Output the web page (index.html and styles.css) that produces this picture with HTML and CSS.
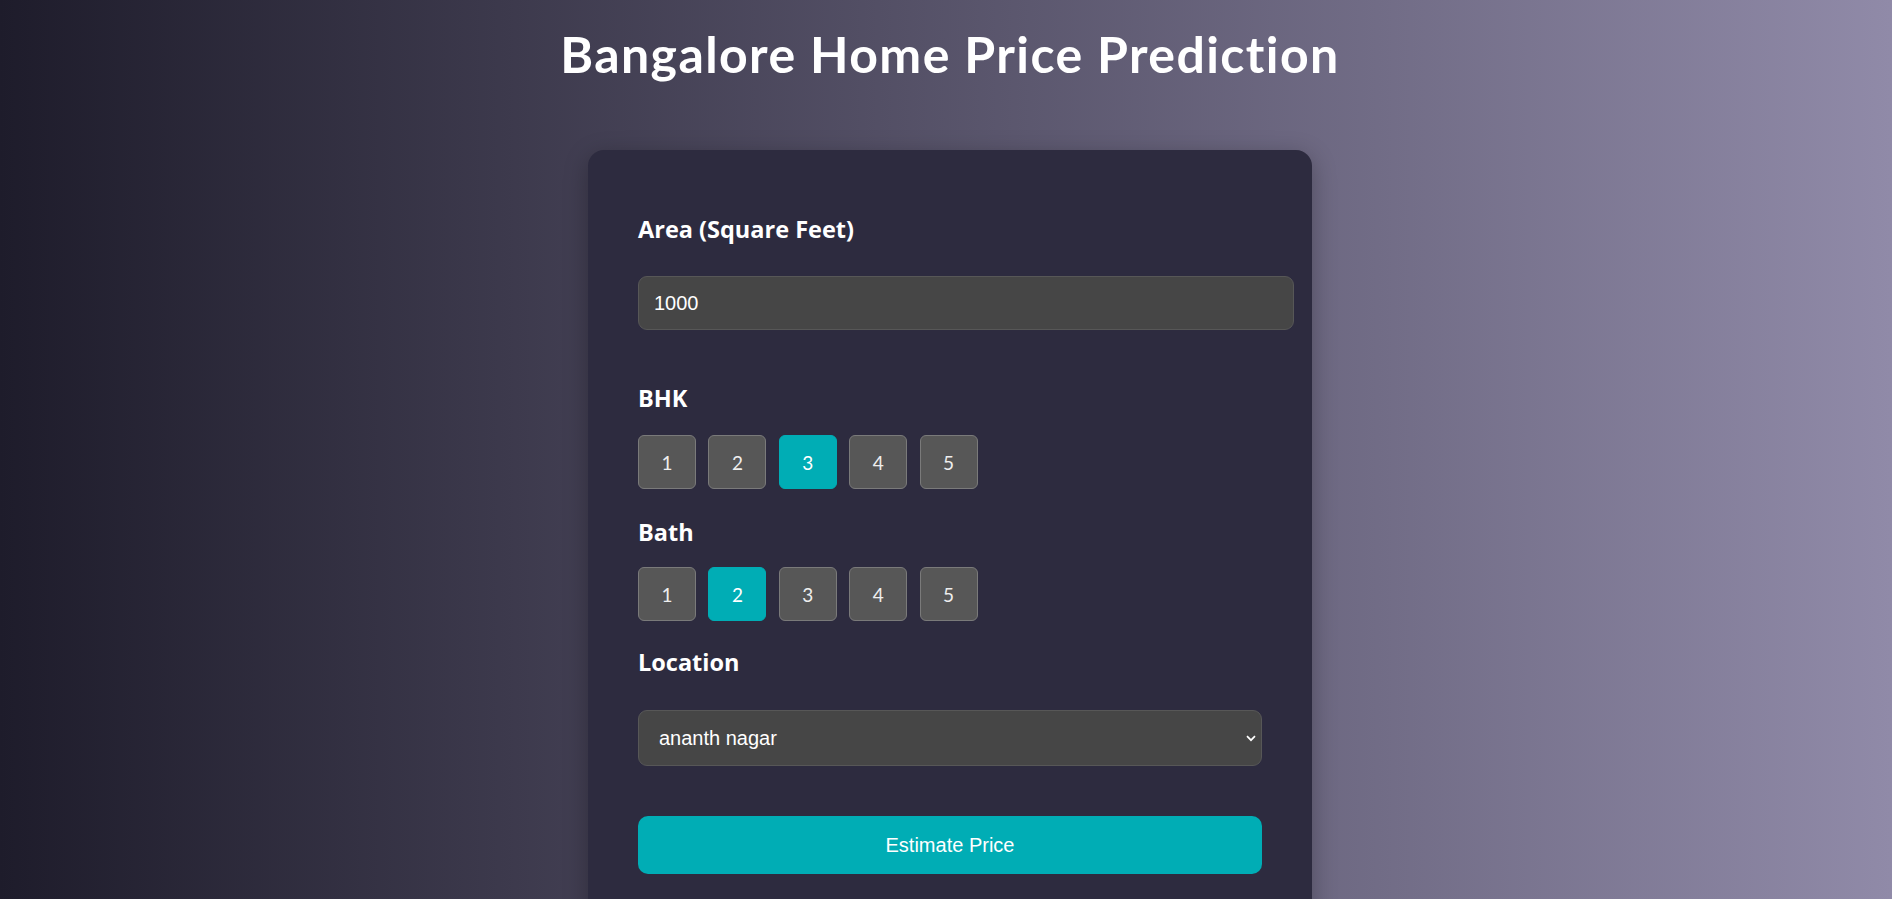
FILE: index.html
```html
<!DOCTYPE html>
<html lang="en">
<head>
<meta charset="utf-8">
<title>Bangalore Home Price Prediction</title>
<link rel="stylesheet" href="styles.css">
</head>
<body>
<h1 class="title">Bangalore Home Price Prediction</h1>
<main class="card">
  <label class="label label-area" for="area">Area (Square Feet)</label>
  <input class="text-input" id="area" type="text" value="1000">

  <div class="label label-bhk">BHK</div>
  <div class="choices">
    <button class="choice" type="button">1</button>
    <button class="choice" type="button">2</button>
    <button class="choice active" type="button">3</button>
    <button class="choice" type="button">4</button>
    <button class="choice" type="button">5</button>
  </div>

  <div class="label label-bath">Bath</div>
  <div class="choices">
    <button class="choice" type="button">1</button>
    <button class="choice active" type="button">2</button>
    <button class="choice" type="button">3</button>
    <button class="choice" type="button">4</button>
    <button class="choice" type="button">5</button>
  </div>

  <label class="label label-loc" for="loc">Location</label>
  <div class="select-wrap">
    <select class="select" id="loc">
      <option>ananth nagar</option>
    </select>
    <svg class="chevron" width="10" height="7" viewBox="0 0 10 7" aria-hidden="true"><path d="M1 1.2 L5 5.2 L9 1.2" fill="none" stroke="#ffffff" stroke-width="1.7"/></svg>
  </div>

  <button class="estimate" type="button">Estimate Price</button>
</main>
</body>
</html>
```
FILE: styles.css
```css
html, body {
  height: 100%;
}
body {
  margin: 0;
  padding: 0 0 0 8px;
  background: linear-gradient(to right, #1e1c2b 0%, #908aa8 100%);
  font-family: "Lato", "Open Sans", sans-serif;
  color: #ffffff;
  overflow: hidden;
  display: flex;
  flex-direction: column;
  align-items: center;
}
.title {
  margin: 24px 0 66px;
  font-size: 50px;
  line-height: 60px;
  letter-spacing: 1.4px;
  font-weight: 700;
  color: #ffffff;
  text-align: center;
}
.card {
  box-sizing: border-box;
  width: 724px;
  flex-shrink: 0;
  background: #2d2b3f;
  border-radius: 16px;
  padding: 50px;
  box-shadow: 0 6px 24px rgba(0, 0, 0, 0.28);
  display: flex;
  flex-direction: column;
  align-items: flex-start;
}
.label {
  display: block;
  font-family: "Open Sans", "Lato", sans-serif;
  font-size: 23.5px;
  line-height: 28px;
  font-weight: 700;
  color: #ffffff;
}
.label-area { margin: 15px 0 33px; }
.label-bhk { margin: 54px 0 23px; }
.label-bath { margin: 29px 0 21px; }
.label-loc { margin: 27px 0 34px; }

.text-input {
  width: 100%;
  height: 22px;
  padding: 15px;
  border: 1px solid #575757;
  border-radius: 9px;
  background: #464646;
  color: #ffffff;
  font-family: "Liberation Sans", Arial, sans-serif;
  font-size: 20px;
  line-height: 22px;
  outline: none;
}
.choices {
  display: flex;
  gap: 12.4px;
}
.choice {
  box-sizing: border-box;
  width: 58px;
  height: 54px;
  border: 1px solid #7a7a7a;
  border-radius: 6px;
  background: #575757;
  color: #eeeeee;
  font-family: "Lato", "Open Sans", sans-serif;
  font-size: 19px;
  padding: 0;
}
.choice.active {
  background: #00adb5;
  border-color: #00adb5;
  color: #ffffff;
}
.select-wrap {
  position: relative;
  width: 100%;
}
.select {
  box-sizing: border-box;
  width: 100%;
  height: 56px;
  padding: 0 20px;
  border: 1px solid #575757;
  border-radius: 9px;
  background: #464646;
  color: #ffffff;
  font-family: "Liberation Sans", Arial, sans-serif;
  font-size: 20px;
  -webkit-appearance: none;
  appearance: none;
  outline: none;
}
.chevron {
  position: absolute;
  right: 6px;
  top: 25px;
  pointer-events: none;
}
.estimate {
  box-sizing: border-box;
  width: 100%;
  height: 58px;
  margin-top: 50px;
  border: none;
  border-radius: 10px;
  background: #00adb5;
  color: #ffffff;
  font-family: "Liberation Sans", Arial, sans-serif;
  font-size: 20px;
  flex-shrink: 0;
}
```
